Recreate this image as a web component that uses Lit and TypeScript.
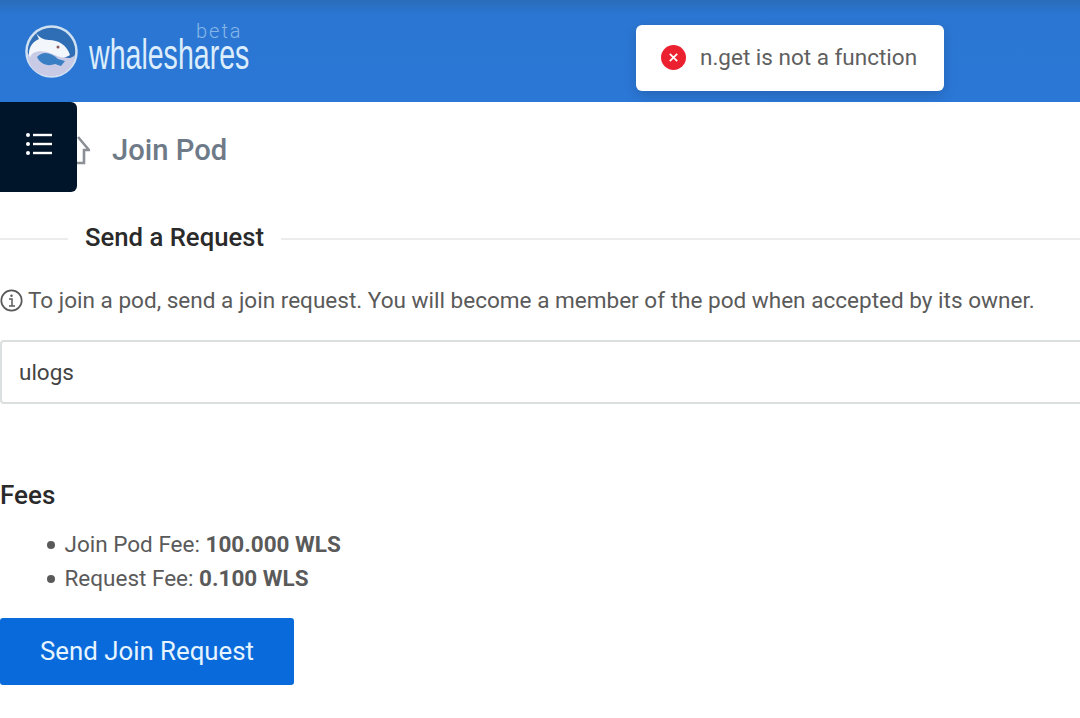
import { css, html, LitElement } from 'lit'
import { customElement } from 'lit/decorators.js'

@customElement('app-root')
export class AppRoot extends LitElement {
  static override styles = css`
    :host {
      display: block;
      position: relative;
      height: 718px;
      overflow: hidden;
      background: #fff;
      font-family: Roboto, 'Liberation Sans', sans-serif;
      color: #5a5a5a;
    }

    * {
      box-sizing: border-box;
    }

    .header {
      height: 102px;
      background: linear-gradient(#2a6db9 0, #2b76d2 14px, #2b77d6 100%);
      display: flex;
      align-items: center;
      padding: 0 0 0 25px;
    }

    .logo {
      display: flex;
      align-items: center;
      gap: 11px;
      margin-top: 1px;
    }

    .wordmark {
      position: relative;
      width: 164px;
      height: 40px;
    }

    .wordmark-text {
      display: block;
      font-family: 'Liberation Sans', sans-serif;
      font-size: 42px;
      line-height: 34px;
      color: #dcedfc;
      transform: scaleX(0.68);
      transform-origin: left center;
      white-space: nowrap;
      margin-top: 6px;
    }

    .beta {
      position: absolute;
      left: 107px;
      top: -9px;
      font-size: 20px;
      font-weight: 300;
      line-height: 16px;
      letter-spacing: 2px;
      color: #86b6e8;
    }

    .toast {
      position: absolute;
      left: 636px;
      top: 25px;
      width: 308px;
      height: 66px;
      background: #fff;
      border-radius: 6px;
      box-shadow: 0 4px 12px rgba(0, 0, 0, 0.15);
      display: flex;
      align-items: center;
      gap: 14px;
      padding: 0 0 2px 25px;
      font-size: 22.5px;
      color: #5f5f5f;
    }

    .menu {
      position: absolute;
      left: 0;
      top: 102px;
      width: 77px;
      height: 90px;
      background: #001529;
      border-radius: 0 6px 6px 0;
      display: flex;
      padding: 30px 0 0 26px;
      z-index: 2;
    }

    .title-row {
      height: 95px;
      display: flex;
      align-items: center;
      padding-left: 66px;
      gap: 22px;
    }

    .title {
      font-size: 29.2px;
      font-weight: 500;
      color: #6e7a88;
    }

    .divider {
      display: flex;
      align-items: center;
      height: 40px;
      margin-top: 20px;
      font-size: 25.7px;
      font-weight: 500;
      color: #2a2a2a;
    }

    .divider::before,
    .divider::after {
      content: '';
      height: 2px;
      margin-top: 3px;
      background: #ececec;
    }

    .divider::before {
      width: 68px;
    }

    .divider::after {
      flex: 1;
    }

    .divider span {
      padding: 0 17px;
    }

    .note {
      display: flex;
      align-items: center;
      gap: 5px;
      margin-top: 27px;
      height: 32px;
      font-size: 22.56px;
      white-space: nowrap;
    }

    .field {
      margin-top: 24px;
      height: 64px;
      width: 1100px;
      border: 2px solid #dcdfdf;
      border-radius: 4px;
      padding: 0 0 1px 17px;
      display: flex;
      align-items: center;
      font-size: 22.5px;
      color: #444;
    }

    .fees {
      margin: 75px 0 0;
      font-size: 26px;
      line-height: 32px;
      font-weight: 500;
      color: #2a2a2a;
    }

    .fee-list {
      list-style: none;
      margin: 16px 0 0;
      padding: 0 0 0 47px;
      font-size: 22.5px;
      line-height: 34px;
    }

    .fee-list li {
      display: flex;
      align-items: center;
      gap: 9.5px;
    }

    .fee-list li::before {
      content: '';
      width: 8px;
      height: 8px;
      border-radius: 50%;
      background: #5a5a5a;
      margin-top: 2px;
    }

    .fee-list b {
      font-weight: 700;
    }

    .submit {
      display: block;
      margin-top: 23px;
      width: 294px;
      height: 67px;
      border: 0;
      border-radius: 3px;
      background: #096bdb;
      color: #e6f4ff;
      font-family: inherit;
      font-size: 25.8px;
      padding: 0 0 2px;
    }
  `

  override render() {
    return html`
      <div class="header">
        <div class="logo">
          <svg width="53" height="53" viewBox="0 0 53 53">
            <circle cx="26.5" cy="26.5" r="25" fill="#2f6db5" stroke="#cfe0f2" stroke-width="2.5" />
            <path d="M3 30C3 44 14 51 27 51C40 51 49 42 50 30C44 36 38 32 30 28C20 23 8 20 3 30Z" fill="#c9cbe6" />
            <path d="M11 8C14 12 18 15 24 15C33 15 42 20 45 30C37 36 30 29 22 27C13 25 6 27 5 33C2 26 6 17 14 14Z" fill="#f3f7fb" />
            <path d="M12 32C18 25 27 28 33 34L40 36L36 41L30 39C23 42 15 39 12 32Z" fill="#3a7fc4" />
            <circle cx="33" cy="22" r="1.5" fill="#8a5a5a" />
          </svg>
          <div class="wordmark">
            <span class="beta">beta</span>
            <span class="wordmark-text">whaleshares</span>
          </div>
        </div>
      </div>

      <div class="toast">
        <svg width="25" height="25" viewBox="0 0 25 25">
          <circle cx="12.5" cy="12.5" r="12.5" fill="#ec2130" />
          <path d="M8.8 8.8L16.2 16.2M16.2 8.8L8.8 16.2" stroke="#fff" stroke-width="1.7" />
        </svg>
        <span>n.get is not a function</span>
      </div>

      <div class="menu">
        <svg width="27" height="25" viewBox="0 0 27 25" fill="#fff">
          <rect x="0" y="1" width="4" height="4" rx="2" />
          <rect x="0" y="10" width="4" height="4" rx="2" />
          <rect x="0" y="19" width="4" height="4" rx="2" />
          <rect x="7" y="1.8" width="19" height="2.4" />
          <rect x="7" y="10.8" width="19" height="2.4" />
          <rect x="7" y="19.8" width="19" height="2.4" />
        </svg>
      </div>

      <div class="title-row">
        <svg width="24" height="32" viewBox="0 0 24 32" fill="none" stroke="#8b8f96" stroke-width="2.6">
          <path d="M12 3L23 16H18V29H1" />
        </svg>
        <span class="title">Join Pod</span>
      </div>

      <div class="divider"><span>Send a Request</span></div>

      <div class="note">
        <svg width="23" height="23" viewBox="0 0 23 23" fill="none" stroke="#595959">
          <circle cx="11.5" cy="11.5" r="10.2" stroke-width="1.7" />
          <circle cx="11.5" cy="6.8" r="1.2" fill="#595959" stroke="none" />
          <path d="M9 10H12V17M9 17H15" stroke-width="1.5" />
        </svg>
        <span>To join a pod, send a join request. You will become a member of the pod when accepted by its owner.</span>
      </div>

      <div class="field">ulogs</div>

      <h4 class="fees">Fees</h4>
      <ul class="fee-list">
        <li><span>Join Pod Fee: <b>100.000 WLS</b></span></li>
        <li><span>Request Fee: <b>0.100 WLS</b></span></li>
      </ul>

      <button class="submit">Send Join Request</button>
    `
  }
}

declare global {
  interface HTMLElementTagNameMap {
    'app-root': AppRoot
  }
}
